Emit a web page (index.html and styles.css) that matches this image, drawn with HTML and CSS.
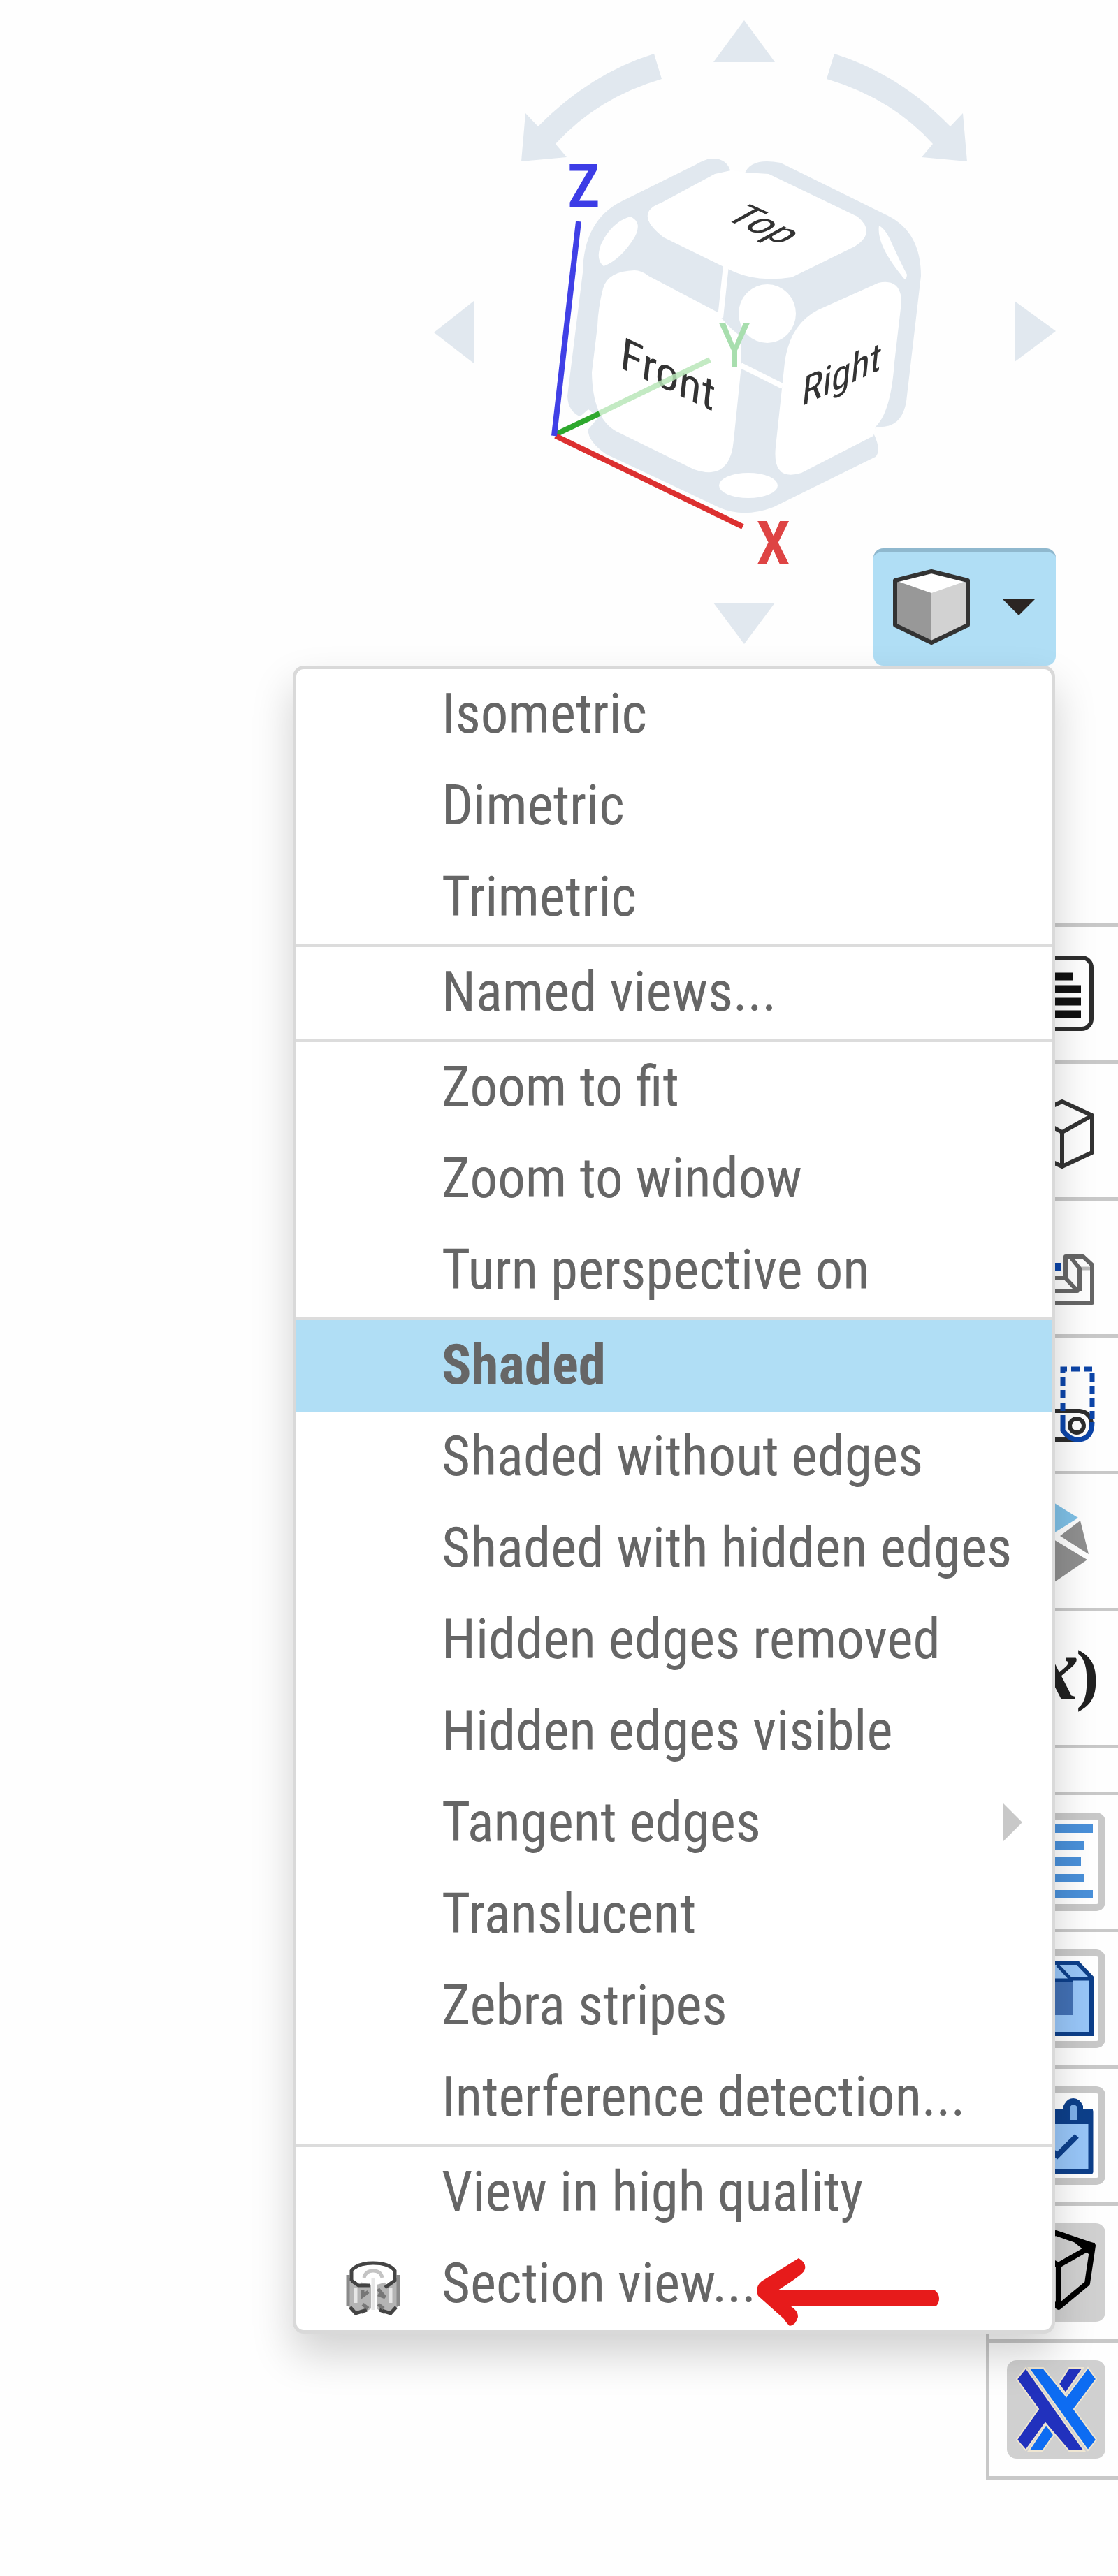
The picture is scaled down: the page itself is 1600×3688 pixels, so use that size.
FILE: index.html
```
<!DOCTYPE html>
<html lang="en">

<head>
    <meta charset="UTF-8">
    <meta name="viewport" content="width=device-width, initial-scale=1.0">
    <title>View options</title>
    <link rel="stylesheet" href="styles.css">
</head>

<body>
    <header class="view-area">
        <svg class="view-cube" viewBox="600 0 920 953" role="img" aria-label="View cube">
            <!-- rotate arrows -->
            <g fill="#e1e8ef">
                <path d="M1065 29L1021 89H1109Z" />
                <path d="M1065 922L1021 863H1109Z" />
                <path d="M621 476L678 431V520Z" />
                <path d="M1511 474L1452 431V518Z" />
                <path id="turn" d="M936 77Q845 105 770 181L752 162L746 231L811 225L795 206Q855 140 947 113Z" />
                <use href="#turn" transform="translate(2130 0) scale(-1 1)" />
            </g>

            <!-- cube body -->
            <path fill="#e1e8ef" d="M1046 248Q1042 227 1020 227Q1010 227 995 236L890 288Q835 315 834 390L812 567Q813 590 832 597L842 610Q838 630 867 650L1030 727Q1065 742 1107 726L1253 654Q1262 645 1250 620L1253 611Q1290 615 1297 575L1318 395Q1318 330 1267 307L1117 233Q1075 225 1066 248Z" />
            <g fill="#ffffff">
                <path d="M1023 249L1046 244L1067 247L1100 249L1227 310Q1255 333 1223 353L1133 397Q1080 405 1042 385L950 340Q905 305 947 290Z" />
                <path d="M908 387Q870 388 863 413Q856 440 855 467L847 533Q848 600 883 618L993 672Q1045 690 1050 630L1060 533Q1062 500 1058 480Q1038 465 1027 447L928 395Q918 387 908 387Z" />
                <path d="M1257 405Q1290 398 1290 433L1280 519Q1275 590 1253 611L1250 624L1147 677Q1105 690 1110 640L1123 519Q1130 465 1170 444Z" />
                <path d="M902 310Q920 318 908 340Q888 372 864 381Q852 372 860 350Q875 318 902 310Z" />
                <path d="M1258 323Q1268 328 1277 350Q1290 378 1298 393Q1297 405 1290 394Q1254 350 1258 323Z" />
                <ellipse cx="1098" cy="449" rx="41" ry="42" />
                <ellipse cx="1071" cy="695" rx="42" ry="18" />
                <path d="M827 599L842 586L856 598L839 618Z" />
            </g>
            <path stroke="#ffffff" stroke-width="8" d="M1039 380L1031 455M1060 523L1120 553" />

            <g class="face-label">
                <text transform="translate(886 526) skewY(25) skewX(-6)">Front</text>
                <text class="right-label" transform="translate(1146 582) skewY(-25) skewX(-6)">Right</text>
                <text transform="matrix(0.87 0.4 -0.8 0.44 1034 312)">Top</text>
            </g>

            <!-- axes -->
            <g fill="none" stroke-width="8">
                <path stroke="#b9e6b9" stroke-opacity="0.85" d="M857 592L1016 515" />
                <path stroke="#2da82d" d="M795 622L858 592" />
                <path stroke="#dc3030" d="M795 624L1063 754" />
                <path stroke="#4040e6" d="M828 317L793 624" />
            </g>
            <g class="axis-label">
                <text x="812" y="297" fill="#3c3ce6">Z</text>
                <text x="1082" y="808" fill="#de4444">X</text>
                <text class="axis-far" x="1028" y="525" fill="#a8deae">Y</text>
            </g>
        </svg>

        <button class="view-button" type="button" aria-label="Camera and render options" aria-expanded="true">
            <svg width="112" height="110" viewBox="0 0 112 110">
                <path fill="#ffffff" d="M56 4L108 17L56 37L4 17Z" />
                <path fill="#989898" d="M4 17L56 35V107L4 81Z" />
                <path fill="#d2d2d2" d="M108 17L56 35V107L108 81Z" />
                <path fill="none" stroke="#333333" stroke-width="6" stroke-linejoin="round" d="M56 4L108 17V81L56 106L4 81V17Z" />
            </svg>
            <svg width="48" height="24" viewBox="0 0 48 24">
                <path fill="#2b2522" d="M0 0H48L24 24Z" />
            </svg>
        </button>

        <ul class="menu">
            <li><button type="button">Isometric</button></li>
            <li><button type="button">Dimetric</button></li>
            <li><button type="button">Trimetric</button></li>
            <li class="divided"><button type="button">Named views...</button></li>
            <li class="divided"><button type="button">Zoom to fit</button></li>
            <li><button type="button">Zoom to window</button></li>
            <li><button type="button">Turn perspective on</button></li>
            <li class="divided"><button class="selected" type="button">Shaded</button></li>
            <li><button type="button">Shaded without edges</button></li>
            <li><button type="button">Shaded with hidden edges</button></li>
            <li><button type="button">Hidden edges removed</button></li>
            <li><button type="button">Hidden edges visible</button></li>
            <li>
                <button type="button">Tangent edges
                    <svg width="28" height="56" viewBox="0 0 28 56">
                        <path fill="#c8c8c8" d="M0 0L28 28L0 56Z" />
                    </svg>
                </button>
            </li>
            <li><button type="button">Translucent</button></li>
            <li><button type="button">Zebra stripes</button></li>
            <li><button type="button">Interference detection...</button></li>
            <li class="divided"><button type="button">View in high quality</button></li>
            <li>
                <button type="button">Section view...</button>
                <svg class="section-icon" width="78" height="80" viewBox="0 0 78 80">
                    <path fill="#b4b4b4" d="M2 22V64L12 72L24 76L36 68V34L12 28ZM76 22V64L66 72L54 76L44 68V34L66 28Z" />
                    <path fill="#ffffff" d="M22 5H56L68 14V26L58 34L50 22L38 16L26 22L20 34L8 26V14Z" />
                    <path fill="none" stroke="#8a8a8a" stroke-width="5" d="M3 20V64M75 20V64" />
                    <path fill="none" stroke="#c4c4c4" stroke-width="5" d="M26 24Q28 14 39 14Q50 14 52 24" />
                    <path fill="none" stroke="#e6e6e6" stroke-width="5" d="M14 38V60M64 38V60M39 24V70" />
                    <path fill="none" stroke="#444444" stroke-width="5" d="M8 28V14Q16 3 39 3Q62 3 70 14V28L56 38M8 28L18 35H34M6 66L14 75L30 70M72 66L64 75L48 70" />
                    <path fill="none" stroke="#777777" stroke-width="5" d="M24 42V50L32 44M24 62L32 68M46 40L56 52L46 48M46 62L54 68" />
                </svg>
                <svg class="pointer" width="262" height="98" viewBox="0 0 262 98">
                    <path fill="#e71b1b" d="M61 1Q74 9 69 19Q66 25 31 47H256Q262 52 262 59Q262 66 257 70H50Q60 76 60 85Q57 97 48 98Q42 92 40 88L3 55Q-2 42 8 34Z" />
                </svg>
            </li>
        </ul>
    </header>

    <aside class="side-panels">
        <nav class="panel">
            <button type="button" aria-label="Properties">
                <svg class="icon" viewBox="0 0 141 141">
                    <rect x="19" y="19" width="102" height="102" rx="14" fill="#ffffff" fill-opacity="0.6" stroke="#2d2d2d" stroke-width="6" />
                    <path stroke="#111111" stroke-width="11" d="M35 46H94M35 64H106M35 82H106M35 100H106" />
                </svg>
            </button>
            <button type="button" aria-label="Part">
                <svg class="icon" viewBox="0 0 141 141">
                    <path fill="none" stroke="#333333" stroke-width="6" stroke-linejoin="round" d="M79 29L122 49V102L79 122L36 102V49ZM36 49L79 73L122 49M79 73V122" />
                </svg>
            </button>
            <button type="button" aria-label="Sheet metal">
                <svg class="icon" viewBox="0 0 141 141">
                    <path fill="none" stroke="#bbbbbb" stroke-width="5" d="M104 72H120M30 104L20 92" />
                    <path fill="none" stroke="#666666" stroke-width="6" stroke-linejoin="round" d="M20 86H84V55H109L122 67V121H20ZM84 86L101 104H30M92 57L104 72V104" />
                    <path stroke="#0c45a8" stroke-width="8" d="M73 64V76" />
                </svg>
            </button>
            <button type="button" aria-label="Frame">
                <svg class="icon" viewBox="0 0 141 141">
                    <path fill="none" stroke="#2d2d2d" stroke-width="6" d="M30 80H104Q121 82 121 100Q121 121 98 121H30" />
                    <circle cx="100" cy="101" r="10" fill="#ffffff" stroke="#2d2d2d" stroke-width="6" />
                    <path fill="none" stroke="#0c45a8" stroke-width="7" stroke-dasharray="12 6" d="M122 92V20H80V98" />
                    <path fill="none" stroke="#0c45a8" stroke-width="7" d="M80 98V108Q90 122 104 121Q122 119 122 96" />
                </svg>
            </button>
            <button type="button" aria-label="Mesh">
                <svg class="icon" viewBox="0 0 141 141">
                    <path fill="#7fc0e6" d="M62 12L102 37L62 62Z" />
                    <path fill="#8f8f8f" d="M76 63L105 41L117 89ZM62 65L115 97L62 133Z" />
                </svg>
            </button>
            <button type="button" aria-label="Variables">
                <svg class="icon variable" viewBox="0 0 141 141">
                    <text x="-4" y="98">(</text>
                    <text class="variable-name" x="38" y="101">x</text>
                    <text x="99" y="98">)</text>
                </svg>
            </button>
        </nav>

        <nav class="panel">
            <button type="button" aria-label="Bill of materials">
                <svg class="icon framed" viewBox="0 0 141 141">
                    <rect x="5" y="5" width="131" height="131" rx="8" fill="none" stroke="#c8c8c8" stroke-width="10" />
                    <path stroke="#4a90d9" stroke-width="12" d="M18 23H123M30 47H111M36 70H106M30 94H111M18 117H123" />
                </svg>
            </button>
            <button type="button" aria-label="Configurations">
                <svg class="icon framed" viewBox="0 0 141 141">
                    <rect x="5" y="5" width="131" height="131" rx="8" fill="none" stroke="#c8c8c8" stroke-width="10" />
                    <path fill="#98c6f8" stroke="#0d3f8a" stroke-width="6" d="M22 19H101L121 40V121H22Z" />
                    <path fill="#4270b4" d="M25 44H94V94H25Z" />
                    <path fill="none" stroke="#0d3f8a" stroke-width="5" d="M72 22L91 42H120M25 44H94" />
                </svg>
            </button>
            <button type="button" aria-label="Tasks">
                <svg class="icon framed" viewBox="0 0 141 141">
                    <rect x="5" y="5" width="131" height="131" rx="8" fill="none" stroke="#c8c8c8" stroke-width="10" />
                    <path fill="#98c6f8" stroke="#0d3f8a" stroke-width="7" stroke-linejoin="round" d="M22 36H120V122H22Z" />
                    <path fill="#0d3f8a" d="M20 33H123V54H20ZM81 36V28Q86 17 95 17Q104 17 109 28V36Z" />
                    <path fill="#7fb0ea" d="M90 48V30Q95 22 101 30V48Z" />
                    <path fill="none" stroke="#0d3f8a" stroke-width="8" d="M50 80L72 99L100 71" />
                </svg>
            </button>
            <button type="button" aria-label="Named positions">
                <svg class="icon" viewBox="0 0 141 141">
                    <rect width="141" height="141" rx="14" fill="#d0d0d0" />
                    <path fill="none" stroke="#000000" stroke-width="8" stroke-linejoin="round" d="M70 14L123 32L115 86L74 120L22 86L18 32ZM18 32L74 60L123 32M74 60V120" />
                    <path fill="#000000" d="M95 26L126 28L122 48Z" />
                </svg>
            </button>
            <button type="button" aria-label="Exchange app">
                <svg class="icon" viewBox="0 0 141 141">
                    <rect width="141" height="141" rx="14" fill="#d0d0d0" />
                    <g stroke="#efe6d2" stroke-width="2">
                        <path fill="#2131bd" d="M27 11L14 27L45 70L14 114L27 129L55 90L89 130H111ZM89 11H109L84 47L74 34Z" />
                        <path fill="#0d6cf2" d="M31 11H52L85 52L116 11L128 27L96 70L128 114L116 129ZM31 130H51L67 107L56 92Z" />
                    </g>
                </svg>
            </button>
        </nav>
    </aside>
</body>

</html>
```
FILE: styles.css
```
* {
    margin: 0;
    padding: 0;
    box-sizing: border-box;
}

body {
    background-color: #fefefe;
    font-family: "Roboto Condensed", Roboto, "Liberation Sans", sans-serif;
    color: #666;
}

button {
    border: none;
    background: none;
    font: inherit;
    color: inherit;
    cursor: pointer;
}

svg {
    display: block;
}

.view-area {
    position: relative;
    display: flex;
    justify-content: flex-end;
    padding-right: 80px;
}

.view-cube {
    width: 920px;
    height: 953px;
}

.face-label {
    font-size: 66px;
    fill: #333;
}

.right-label {
    font-size: 56px;
}

.axis-label {
    font-size: 88px;
    font-weight: 600;
}

.axis-far {
    font-weight: 400;
}

.view-button {
    position: absolute;
    right: 89px;
    bottom: 0;
    display: flex;
    align-items: center;
    justify-content: space-between;
    width: 261px;
    height: 168px;
    padding: 0 29px 5px 27px;
    background-color: #b0def5;
    border-top: 5px solid #8fb8ce;
    border-radius: 14px;
}

/* drop-down menu, lies over the side panels */
.menu {
    position: absolute;
    top: 100%;
    left: 419px;
    right: 90px;
    z-index: 2;
    list-style: none;
    background-color: #fff;
    border: 5px solid #d9d9d9;
    border-radius: 16px;
    box-shadow: 0 30px 60px rgba(0, 0, 0, 0.18);
}

.menu li {
    position: relative;
}

.menu .divided {
    border-top: 5px solid #dcdcdc;
}

.menu button {
    display: flex;
    align-items: center;
    justify-content: space-between;
    width: 100%;
    height: 131px;
    padding: 0 42px 4px 208px;
    font-size: 79px;
    line-height: 124px;
    text-align: left;
    white-space: nowrap;
}

.menu button:hover,
.menu .selected {
    background-color: #b0def5;
}

.menu .selected {
    font-weight: 700;
}

.section-icon {
    position: absolute;
    left: 71px;
    top: 32px;
}

.pointer {
    position: absolute;
    left: 658px;
    top: 27px;
}

/* panel buttons on the right edge */
.side-panels {
    display: flex;
    flex-direction: column;
    align-items: flex-end;
    gap: 62px;
    margin-top: 369px;
}

.panel {
    display: flex;
    flex-direction: column;
    border-left: 5px solid #c8c8c8;
    border-bottom: 5px solid #c8c8c8;
}

.panel button {
    height: 196px;
    padding: 25px 18px 25px 25px;
    border-top: 5px solid #c8c8c8;
}

.icon {
    width: 141px;
    height: 141px;
}

.framed {
    background-color: #fff;
    border-radius: 12px;
}

.variable {
    font-family: "Liberation Serif", serif;
    font-size: 98px;
    font-weight: 700;
    fill: #222;
}

.variable-name {
    font-size: 130px;
    font-style: italic;
}
```
